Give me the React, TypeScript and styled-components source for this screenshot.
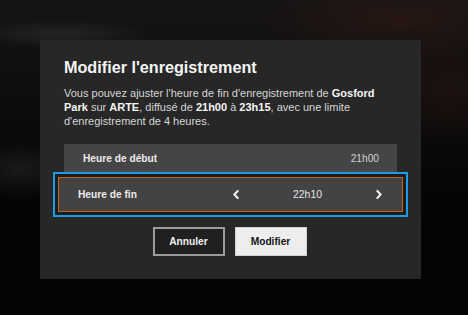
import styled, { createGlobalStyle } from 'styled-components';

const GlobalStyle = createGlobalStyle`
    html, body {
        margin: 0;
        padding: 0;
        background: #050505;
    }
    * {
        box-sizing: border-box;
    }
`;

const Screen = styled.div`
    width: 468px;
    height: 315px;
    overflow: hidden;
    padding: 40px 0 0 40px;
    font-family: 'Liberation Sans', Arial, sans-serif;
    background:
        radial-gradient(ellipse 90px 14px at 60px 34px, rgba(70, 70, 70, 0.35), transparent),
        radial-gradient(ellipse 60px 30px at 20px 170px, rgba(60, 60, 60, 0.35), transparent),
        radial-gradient(ellipse 140px 40px at 400px 20px, rgba(60, 28, 20, 0.45), transparent),
        radial-gradient(ellipse 80px 60px at 450px 90px, rgba(45, 22, 18, 0.45), transparent),
        linear-gradient(180deg, #161414 0%, #0e0d0d 30%, #050505 60%, #030303 100%);
`;

const Modal = styled.div`
    width: 381px;
    height: 239px;
    background: #272727;
    padding: 17px 24px 23px;
    display: flex;
    flex-direction: column;
`;

const Title = styled.h1`
    margin: 0;
    font-size: 16.2px;
    line-height: 20px;
    font-weight: 700;
    color: #f4f4f4;
`;

const Description = styled.p`
    margin: 9px 0 0;
    font-size: 11px;
    line-height: 14px;
    color: #d6d6d6;

    b {
        color: #f4f4f4;
        font-weight: 700;
    }
`;

const TimeList = styled.div`
    margin-top: 16px;
    display: flex;
    flex-direction: column;
`;

const StaticRow = styled.div`
    height: 28px;
    background: #454545;
    display: flex;
    align-items: center;
    justify-content: space-between;
    padding: 0 18px 0 19px;
`;

const Label = styled.span`
    font-size: 10.2px;
    font-weight: 700;
    color: #ececec;
`;

const Value = styled.span`
    font-size: 10.2px;
    color: #d2d2d2;
`;

const FocusRing = styled.div`
    margin: 0 -11px;
    border: 2px solid #1a9de6;
    padding: 3px;
    background: #1d1d1d;
`;

const EditRow = styled.div`
    height: 35px;
    border: 1px solid #c2661d;
    background: #434343;
    display: flex;
    align-items: center;
    padding: 0 20px 0 19px;
`;

const Stepper = styled.div`
    margin-left: auto;
    width: 149px;
    display: flex;
    align-items: center;
    justify-content: space-between;
`;

const StepValue = styled.span`
    font-size: 10.4px;
    color: #e6e6e6;
`;

const Chevron = styled.svg`
    display: block;
    width: 6px;
    height: 9px;
`;

const Actions = styled.div`
    margin-top: 10px;
    display: flex;
    justify-content: center;
    gap: 10px;
    padding-right: 2px;
`;

const Button = styled.button<{ $primary?: boolean }>`
    width: 72px;
    height: 29px;
    padding: 0;
    font-family: 'Liberation Sans', Arial, sans-serif;
    font-size: 10.2px;
    font-weight: 700;
    cursor: pointer;
    background: ${(p) => (p.$primary ? '#ededed' : '#202020')};
    color: ${(p) => (p.$primary ? '#141414' : '#f2f2f2')};
    border: ${(p) => (p.$primary ? '1px solid #d0d0d0' : '2px solid #9c9c9c')};
`;

function ChevronIcon({ dir }: { dir: 'left' | 'right' }) {
    const d = dir === 'left' ? 'M4.6 1 L1.4 4.5 L4.6 8' : 'M1.4 1 L4.6 4.5 L1.4 8';
    return (
        <Chevron viewBox="0 0 6 9">
            <path d={d} fill="none" stroke="#f2f2f2" strokeWidth="2" strokeLinecap="square" strokeLinejoin="miter" />
        </Chevron>
    );
}

export default function App() {
    return (
        <>
            <GlobalStyle />
            <Screen>
                <Modal>
                    <Title>Modifier l'enregistrement</Title>
                    <Description>
                        Vous pouvez ajuster l'heure de fin d'enregistrement de <b>Gosford Park</b> sur{' '}
                        <b>ARTE</b>, diffusé de <b>21h00</b> à <b>23h15</b>, avec une limite
                        d'enregistrement de 4 heures.
                    </Description>
                    <TimeList>
                        <StaticRow>
                            <Label>Heure de début</Label>
                            <Value>21h00</Value>
                        </StaticRow>
                        <FocusRing>
                            <EditRow>
                                <Label>Heure de fin</Label>
                                <Stepper>
                                    <ChevronIcon dir="left" />
                                    <StepValue>22h10</StepValue>
                                    <ChevronIcon dir="right" />
                                </Stepper>
                            </EditRow>
                        </FocusRing>
                    </TimeList>
                    <Actions>
                        <Button>Annuler</Button>
                        <Button $primary>Modifier</Button>
                    </Actions>
                </Modal>
            </Screen>
        </>
    );
}
